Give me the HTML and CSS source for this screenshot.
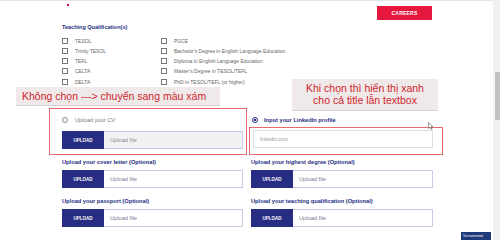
FILE: index.html
```html
<!DOCTYPE html>
<html lang="vi">
    <head>
        <meta charset="utf-8">
        <title>Apply - Teacher application</title>
        <link rel="stylesheet" href="styles.css">
    </head>
    <body>
        <div class="topline"></div>
        <div class="page">
            <div class="header">
                <span class="req-dot"></span>
                <a class="careers" href="#">CAREERS</a>
            </div>

            <div class="qual">
                <h3>Teaching Qualification(s)</h3>
                <div class="qual-grid">
                    <label class="check"><span class="box"></span>TESOL</label>
                    <label class="check"><span class="box"></span>PGCE</label>
                    <label class="check"><span class="box"></span>Trinity TESOL</label>
                    <label class="check"><span class="box"></span>Bachelor's Degree in English Language Education</label>
                    <label class="check"><span class="box"></span>TEFL</label>
                    <label class="check"><span class="box"></span>Diploma in English Language Education</label>
                    <label class="check"><span class="box"></span>CELTA</label>
                    <label class="check"><span class="box"></span>Master's Degree in TESOL/TEFL</label>
                    <label class="check"><span class="box"></span>DELTA</label>
                    <label class="check"><span class="box"></span>PhD in TESOL/TEFL (or higher)</label>
                </div>
            </div>

            <div class="uploads">
                <div class="field">
                    <label class="choice off"><span class="radio"></span>Upload your CV</label>
                    <div class="upload first disabled">
                        <span class="upload-btn">UPLOAD</span>
                        <span class="upload-file">Upload file</span>
                    </div>
                </div>
                <div class="field">
                    <label class="choice"><span class="radio on"></span>Input your LinkedIn profile</label>
                    <div class="link-input">linkedin.com</div>
                </div>

                <div class="field">
                    <label class="title">Upload your cover letter (Optional)</label>
                    <div class="upload">
                        <span class="upload-btn">UPLOAD</span>
                        <span class="upload-file">Upload file</span>
                    </div>
                </div>
                <div class="field">
                    <label class="title">Upload your highest degree (Optional)</label>
                    <div class="upload">
                        <span class="upload-btn">UPLOAD</span>
                        <span class="upload-file">Upload file</span>
                    </div>
                </div>

                <div class="field">
                    <label class="title">Upload your passport (Optional)</label>
                    <div class="upload">
                        <span class="upload-btn">UPLOAD</span>
                        <span class="upload-file">Upload file</span>
                    </div>
                </div>
                <div class="field">
                    <label class="title">Upload your teaching qualification (Optional)</label>
                    <div class="upload">
                        <span class="upload-btn">UPLOAD</span>
                        <span class="upload-file">Upload file</span>
                    </div>
                </div>
            </div>
        </div>

        <!-- review annotations -->
        <div class="note note-grey">Không chọn ---&gt; chuyển sang màu xám</div>
        <div class="note note-blue">Khi chọn thì hiển thị xanh<br>cho cả title lẫn textbox</div>
        <div class="mark mark-cv"></div>
        <div class="mark mark-link"></div>
        <svg class="cursor" width="6" height="8" viewBox="0 0 6 8">
            <path d="M0.5 0.5 L0.5 6.5 L2 5 L3.2 7.5 L4 7.1 L2.9 4.7 L5 4.7 Z" fill="#fff" stroke="#555" stroke-width="0.6"/>
        </svg>

        <div class="scrollbar"><div class="thumb"></div></div>
        <div class="watermark">Test watermark</div>
    </body>
</html>
```

FILE: styles.css
```css
body{
    margin:0;
    font-family:"Liberation Sans",Arial,sans-serif;
    background-color:#fff;
    width:500px;
    height:240px;
    overflow:hidden;
}
.topline{
    height:1px;
    background-color:#e4e4e4;
}
.page{
    margin-left:62px;
    width:371px;
}
.header{
    display:flex;
    justify-content:space-between;
    align-items:flex-start;
    height:22px;
    padding-top:3px;
    box-sizing:border-box;
}
.req-dot{
    width:2px;
    height:2px;
    background-color:#e8183f;
    margin-left:5px;
}
.careers{
    width:55px;
    height:14px;
    margin-top:2px;
    margin-right:1px;
    background-color:#e6173e;
    color:#fff;
    font-size:5px;
    font-weight:bold;
    line-height:14px;
    text-align:center;
    text-decoration:none;
    letter-spacing:0.2px;
}
.qual h3{
    margin:0;
    font-size:5.5px;
    line-height:8px;
    color:#262d82;
    font-weight:bold;
}
.qual-grid{
    display:grid;
    grid-template-columns:99px 1fr;
    grid-auto-rows:10.25px;
    margin-top:4.5px;
}
.check{
    display:flex;
    align-items:center;
    gap:7px;
    font-size:5px;
    color:#666;
}
.box{
    width:6px;
    height:6px;
    border:0.8px solid #777;
    box-sizing:border-box;
}
.uploads{
    display:grid;
    grid-template-columns:181px 182px;
    column-gap:8px;
    row-gap:8.5px;
    margin-top:29px;
}
.field label{
    display:flex;
    align-items:center;
    height:8px;
    font-size:5.7px;
    font-weight:bold;
    color:#262d82;
}
.choice{
    gap:6px;
}
.choice.off{
    color:#777;
    font-weight:normal;
    gap:7px;
}
.radio{
    width:6px;
    height:6px;
    border:0.8px solid #888;
    border-radius:50%;
    box-sizing:border-box;
}
.radio.on{
    margin-left:1px;
    border-color:#262d82;
    background:radial-gradient(circle,#262d82 45%,#fff 55%);
}
.upload{
    display:flex;
    height:18.5px;
    margin-top:4px;
}
.upload.first{
    margin-top:7px;
}
.upload-btn{
    width:42px;
    background-color:#262d82;
    color:#fff;
    font-size:4.5px;
    font-weight:bold;
    display:flex;
    align-items:center;
    justify-content:center;
}
.upload-file{
    flex:1;
    border:1px solid #c9c9e8;
    border-left:none;
    font-size:5.7px;
    color:#7a7a9a;
    display:flex;
    align-items:center;
    padding-left:6px;
}
.upload.disabled .upload-file{
    background-color:#f1f1f1;
    color:#8a8a9a;
}
.link-input{
    height:18px;
    margin-top:6px;
    margin-left:2px;
    border:1px solid #dedede;
    box-sizing:border-box;
    font-size:5px;
    color:#999;
    display:flex;
    align-items:center;
    padding-left:6px;
}
.note{
    position:absolute;
    background-color:#efe9e9;
    color:#cf1f2c;
    font-size:10.5px;
    border-bottom:1px solid #d6d0d0;
    box-sizing:border-box;
}
.note-grey{
    left:16px;
    top:87px;
    width:204px;
    height:19px;
    line-height:18px;
    padding-left:6px;
}
.note-blue{
    left:292px;
    top:79px;
    width:146px;
    height:32px;
    line-height:12px;
    padding-top:3px;
    text-align:center;
}
.mark{
    position:absolute;
    border:1.5px solid #e86a6a;
    box-sizing:border-box;
}
.mark-cv{
    left:49px;
    top:108px;
    width:198px;
    height:47px;
}
.mark-link{
    left:249px;
    top:127px;
    width:194px;
    height:28px;
}
.cursor{
    position:absolute;
    left:428px;
    top:122px;
}
.scrollbar{
    position:absolute;
    right:0;
    top:0;
    width:7px;
    height:240px;
    background-color:#f1f1f1;
}
.thumb{
    margin-top:72px;
    margin-left:2px;
    width:5px;
    height:48px;
    background-color:#c1c1c1;
}
.watermark{
    position:absolute;
    left:461px;
    top:232px;
    width:30px;
    height:8px;
    background-color:#1f3a78;
    color:#fff;
    font-size:3px;
    line-height:8px;
    padding-left:2px;
    box-sizing:border-box;
}
```
